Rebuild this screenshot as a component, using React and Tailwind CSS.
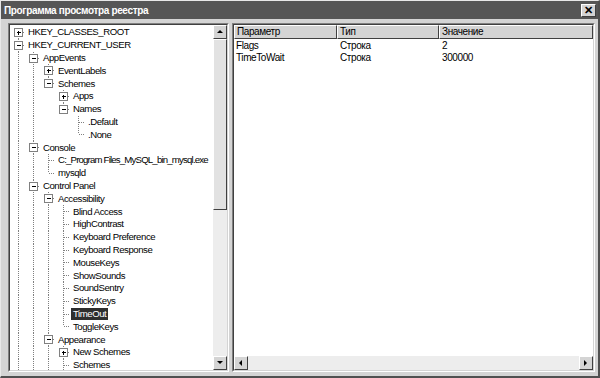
import React from "react"

const tree = [
    { t: "HKEY_CLASSES_ROOT", closed: true },
    {
        t: "HKEY_CURRENT_USER",
        c: [
            {
                t: "AppEvents",
                c: [
                    { t: "EventLabels", closed: true },
                    {
                        t: "Schemes",
                        c: [
                            { t: "Apps", closed: true },
                            { t: "Names", c: [{ t: ".Default" }, { t: ".None" }] },
                        ],
                    },
                ],
            },
            {
                t: "Console",
                c: [{ t: "C:_Program Files_MySQL_bin_mysql.exe", tight: true }, { t: "mysqld" }],
            },
            {
                t: "Control Panel",
                c: [
                    {
                        t: "Accessibility",
                        c: [
                            { t: "Blind Access" },
                            { t: "HighContrast" },
                            { t: "Keyboard Preference" },
                            { t: "Keyboard Response" },
                            { t: "MouseKeys" },
                            { t: "ShowSounds" },
                            { t: "SoundSentry" },
                            { t: "StickyKeys" },
                            { t: "TimeOut", selected: true },
                            { t: "ToggleKeys" },
                        ],
                    },
                    {
                        t: "Appearance",
                        c: [{ t: "New Schemes", closed: true }, { t: "Schemes" }, { t: "Colors" }],
                    },
                    { t: "Colors" },
                ],
            },
            { t: "Environment" },
        ],
    },
    { t: "HKEY_LOCAL_MACHINE", closed: true },
]

function flatten(nodes, anc, out) {
    nodes.forEach((n, i) => {
        const last = i === nodes.length - 1
        out.push({ ...n, anc, last, first: anc.length === 0 && i === 0 })
        if (n.c) flatten(n.c, [...anc, last], out)
    })
    return out
}

// only the rows that fit in the panel are drawn; the rest just keep the guide lines going
const rows = flatten(tree, [], []).slice(0, 27)

const DOT = { stroke: "#808080", strokeDasharray: "1 1", shapeRendering: "crispEdges" }

function Guide({ show }) {
    return (
        <svg width="15" height="12.8" className="shrink-0">
            {show && <line x1="8.5" x2="8.5" y1="0" y2="12.8" {...DOT} />}
        </svg>
    )
}

function Elbow({ row }) {
    const expandable = row.c || row.closed
    return (
        <svg width="15" height="12.8" className="shrink-0">
            {!row.first && <line x1="8.5" x2="8.5" y1="0" y2="6.4" {...DOT} />}
            {!row.last && <line x1="8.5" x2="8.5" y1="6.4" y2="12.8" {...DOT} />}
            <line x1="9" x2="15" y1="6.5" y2="6.5" {...DOT} />
            {expandable && (
                <g shapeRendering="crispEdges">
                    <rect x="4.5" y="2.5" width="8" height="8" fill="#fff" stroke="#808080" />
                    <line x1="6.5" x2="11" y1="6.5" y2="6.5" stroke="#000" />
                    {row.closed && <line x1="8.5" x2="8.5" y1="4.5" y2="9" stroke="#000" />}
                </g>
            )}
        </svg>
    )
}

function Arrow({ dir }) {
    const pts = {
        up: "1,5 4,2 7,5",
        down: "1,2 4,5 7,2",
        left: "5,1 2,4 5,7",
        right: "2,1 5,4 2,7",
    }[dir]
    return (
        <svg width="8" height="8">
            <polygon points={pts} fill="#000" />
        </svg>
    )
}

function SBtn({ dir }) {
    return (
        <div className="w-[14px] h-[14px] shrink-0 bg-[#d4d4d4] border border-t-white border-l-white border-r-[#404040] border-b-[#404040] flex items-center justify-center">
            <Arrow dir={dir} />
        </div>
    )
}

function Sunken({ className, children }) {
    return (
        <div className={`border border-t-[#808080] border-l-[#808080] border-r-white border-b-white ${className}`}>
            <div className="w-full h-full border border-t-[#404040] border-l-[#404040] border-r-[#d4d4d4] border-b-[#d4d4d4] flex overflow-hidden">
                {children}
            </div>
        </div>
    )
}

const values = [
    { name: "Flags", type: "Строка", val: "2" },
    { name: "TimeToWait", type: "Строка", val: "300000" },
]

export default function App() {
    return (
        <div className="w-[600px] h-[378px] bg-[#d4d4d4] flex flex-col border-t border-l border-t-[#e8e8e8] border-l-[#e8e8e8] border-r-2 border-b-2 border-r-[#505050] border-b-[#505050] overflow-hidden font-['Liberation_Sans',Arial,sans-serif] text-[10px] text-black">
            {/* Title bar */}
            <div className="h-[18px] shrink-0 bg-[#565656] flex items-center justify-between pl-[3px] pr-[2px]">
                <span className="text-white font-bold text-[10px] tracking-[-0.35px]">Программа просмотра реестра</span>
                <div className="w-[15px] h-[13px] bg-[#d4d4d4] border border-t-white border-l-white border-r-[#404040] border-b-[#404040] flex items-center justify-center text-[11px] font-bold leading-none">
                    ✕
                </div>
            </div>

            {/* Body */}
            <div className="flex-1 flex gap-[3px] pt-[4px] pb-[4px] pl-[7px] pr-[3px] min-h-0">
                {/* Tree */}
                <Sunken className="w-[221px] shrink-0">
                    <div className="flex-1 bg-white overflow-hidden pt-[1px] text-[9.6px] tracking-[-0.45px]">
                        {rows.map((r, i) => (
                            <div key={i} className="flex h-[12.8px] items-center">
                                {r.anc.map((last, j) => (
                                    <Guide key={j} show={!last} />
                                ))}
                                <Elbow row={r} />
                                <span
                                    className={`ml-[1px] px-[2px] leading-[12px] whitespace-nowrap ${r.tight ? "tracking-[-0.8px]" : ""} ${r.selected ? "bg-[#2e2e2e] text-white" : ""}`}
                                >
                                    {r.t}
                                </span>
                            </div>
                        ))}
                    </div>
                    <div className="w-[14px] shrink-0 flex flex-col bg-[#ededed]">
                        <SBtn dir="up" />
                        <div className="h-[171px] shrink-0 bg-[#e2e2e2] border border-t-white border-l-white border-r-[#404040] border-b-[#404040]" />
                        <div className="flex-1" />
                        <SBtn dir="down" />
                    </div>
                </Sunken>

                {/* Values list */}
                <Sunken className="flex-1 min-w-0">
                    <div className="flex-1 flex flex-col bg-white min-w-0">
                        <div className="h-[14px] shrink-0 flex bg-[#d4d4d4]">
                            {[
                                ["Параметр", "w-[103px]"],
                                ["Тип", "w-[102px]"],
                                ["Значение", "flex-1"],
                            ].map(([h, w]) => (
                                <div
                                    key={h}
                                    className={`${w} border border-t-white border-l-white border-r-[#404040] border-b-[#404040] pl-[2px] leading-[12px] tracking-[-0.4px]`}
                                >
                                    {h}
                                </div>
                            ))}
                        </div>
                        <div className="flex-1 pt-[1px] tracking-[-0.4px]">
                            {values.map((v) => (
                                <div key={v.name} className="flex h-[11.5px] leading-[11.5px]">
                                    <div className="w-[103px] pl-[2px]">{v.name}</div>
                                    <div className="w-[102px] pl-[3px]">{v.type}</div>
                                    <div className="flex-1 pl-[3px]">{v.val}</div>
                                </div>
                            ))}
                        </div>
                        <div className="h-[14px] shrink-0 flex bg-[#ededed]">
                            <SBtn dir="left" />
                            <div className="flex-1" />
                            <SBtn dir="right" />
                        </div>
                    </div>
                </Sunken>
            </div>
        </div>
    )
}
